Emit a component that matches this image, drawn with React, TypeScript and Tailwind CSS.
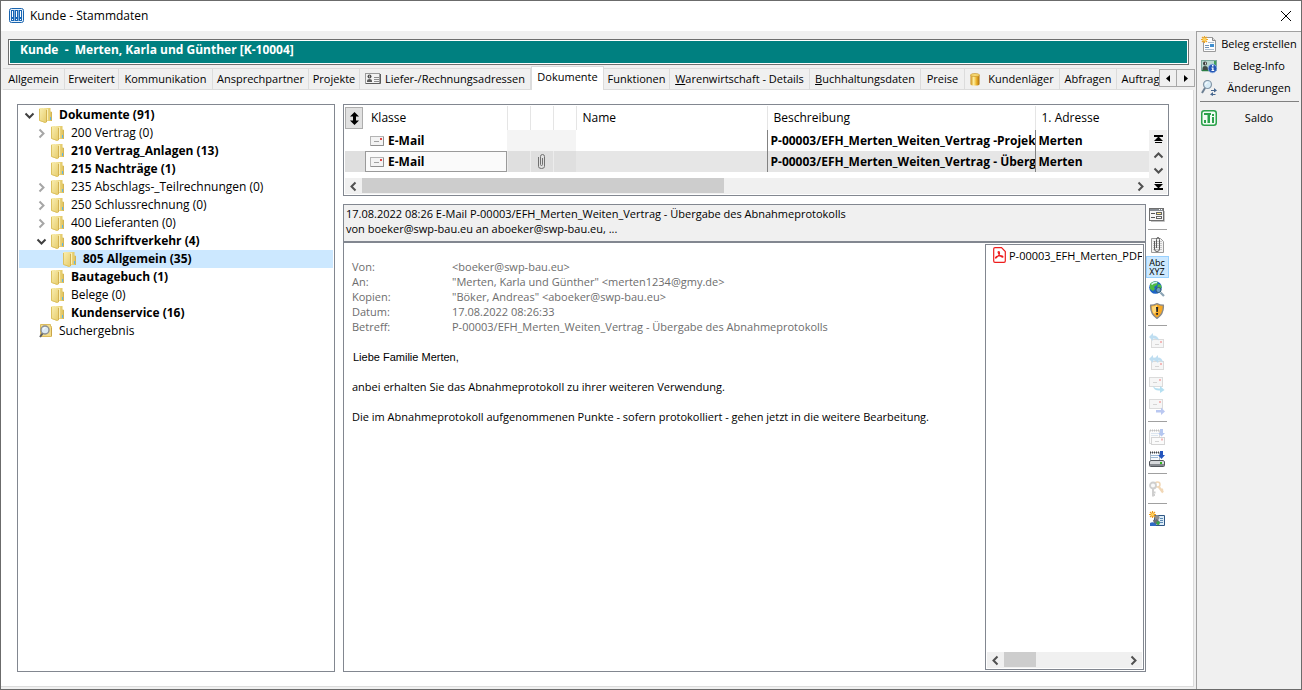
import type { ReactNode } from "react"
import clsx from "clsx"

/* ---------- small glyphs ---------- */

type Direction = "left" | "right" | "up" | "down"

const chevronPaths: Record<Direction, string> = {
  left: "M7.5 1.5 3.5 5.5l4 4",
  right: "M3.5 1.5l4 4-4 4",
  up: "M1.5 7.5l4-4 4 4",
  down: "M1.5 3.5l4 4 4-4",
}

function Chevron({ dir, color = "#505050" }: { dir: Direction; color?: string }) {
  return (
    <svg width="11" height="11" viewBox="0 0 11 11" fill="none" stroke={color} strokeWidth="2">
      <path d={chevronPaths[dir]} />
    </svg>
  )
}

function JumpGlyph({ flip }: { flip?: boolean }) {
  return (
    <svg width="9" height="9" viewBox="0 0 9 9" className={clsx(flip && "rotate-180")}>
      <path d="M0 0h9v2H0zM4 2h1l4 4H0zM1 7h7v1H1z" fill="#000" />
    </svg>
  )
}

function Icon16({ children, faded }: { children: ReactNode; faded?: boolean }) {
  return (
    <svg width="16" height="16" viewBox="0 0 16 16" className={clsx("shrink-0", faded && "opacity-35")}>
      {children}
    </svg>
  )
}

/* ---------- icons ---------- */

function AppIcon() {
  return (
    <svg width="16" height="16" viewBox="0 0 16 16">
      <rect x="0.5" y="0.5" width="14" height="14" rx="2" fill="#e8f2fb" stroke="#1a64ae" />
      <path d="M2 2h3.500v11H2zM6 2h3.500v11H6zM10 2h3v11h-3z" fill="#1766b5" />
      <path d="M3 3h1v6H3zM7 3h1v6H7zM11 3h1v6h-1zM3 11h1v1H3zM7 11h1v1H7zM11 11h1v1h-1z" fill="#fff" />
    </svg>
  )
}

function FolderIcon() {
  return (
    <svg width="14" height="16" viewBox="0 0 14 16" className="shrink-0">
      <defs>
        <linearGradient id="folderFront" x1="0" x2="1" y1="0" y2="1">
          <stop offset="0" stopColor="#faf0b4" />
          <stop offset="1" stopColor="#e6cb69" />
        </linearGradient>
        <linearGradient id="folderBack" x1="0" x2="1" y1="0" y2="0">
          <stop offset="0" stopColor="#f6e9a6" />
          <stop offset="1" stopColor="#dfc25a" />
        </linearGradient>
      </defs>
      <path d="M5 1h6.500v3.500h1V14H5z" fill="url(#folderBack)" />
      <path d="M0 1.500 1 1h3l3.500 1.500V15.500L6 16 0 13.500z" fill="url(#folderFront)" />
      <path d="M.500 2v11.500l6 2" fill="none" stroke="#dcc160" />
      <path d="M7 3h1v12H7z" fill="#d3b252" />
      <path d="M8 2h1v11H8z" fill="#faf0b8" />
      <path d="M12 5h1v9h-1z" fill="#d2b455" />
      <path d="M11 10h1v3h-1z" fill="#5fb7e8" />
    </svg>
  )
}

function SearchFolderIcon() {
  return (
    <svg width="14" height="16" viewBox="0 0 14 16" className="shrink-0">
      <path d="M1.500 1.500h10v2h1v10h-11z" fill="#f3dc8a" stroke="#dcbc5e" />
      <path d="M12 5h1v8h-1z" fill="#c9a54a" />
      <circle cx="6" cy="7" r="4" fill="#dceaf4" stroke="#8b8f94" strokeWidth="1.4" />
      <path d="M4.500 6.500A2 2 0 0 1 6.500 4.500" stroke="#fff" fill="none" />
      <path d="M3.500 10.500 1 14" stroke="#5b5f66" strokeWidth="2" />
    </svg>
  )
}

function CardIcon() {
  return (
    <Icon16>
      <rect x="0.5" y="2.5" width="14" height="10" fill="#f3f3f3" stroke="#9a9a9a" />
      <path d="M1 12.5h14.5V3" stroke="#5d5d5d" fill="none" />
      <circle cx="4.5" cy="5.5" r="2" fill="#4d4d4d" />
      <path d="M2 11V9.5Q2 8 4.500 8T7 9.500V11z" fill="#5b5b5b" />
      <path d="M4 4.500h1v2H4z" fill="#bbb" />
      <path d="M9 6.500h5M9 8.500h5M9 10.500h5" stroke="#8c8c8c" />
    </Icon16>
  )
}

function BarrelIcon() {
  return (
    <svg width="10" height="13" viewBox="0 0 10 13" className="mr-1 shrink-0">
      <defs>
        <linearGradient id="barrel" x1="0" x2="1" y1="0" y2="0">
          <stop offset="0" stopColor="#c98a14" />
          <stop offset="0.35" stopColor="#fff0a0" />
          <stop offset="0.65" stopColor="#eeb52c" />
          <stop offset="1" stopColor="#a96d0c" />
        </linearGradient>
      </defs>
      <path d="M0.500 2v9q0 1.500 4.500 1.500T9.500 11V2z" fill="url(#barrel)" />
      <ellipse cx="5" cy="2" rx="4.500" ry="1.500" fill="#f6d973" stroke="#c28a1e" strokeWidth="0.6" />
    </svg>
  )
}

function MailIcon() {
  return (
    <svg width="14" height="10" viewBox="0 0 14 10" className="shrink-0">
      <rect x="0.5" y="0.5" width="13" height="9" fill="#f3f3f3" stroke="#b4b4b4" />
      <path d="M1 9.500h12.500V1" stroke="#8f8f8f" fill="none" />
      <rect x="10" y="2" width="2" height="2" fill="#e04848" />
      <path d="M4 5.500h5" stroke="#a0a0a0" />
    </svg>
  )
}

function PaperclipIcon() {
  return (
    <svg width="9" height="17" viewBox="0 0 9 17" fill="none" stroke="#707070" strokeWidth="1">
      <path d="M1.500 4v9.500q0 2 3 2t3-2V3.500q0-2-2-2t-2 2V11.500q0 1 1 1t1-1V5" />
    </svg>
  )
}

function PdfIcon() {
  return (
    <svg width="13" height="16" viewBox="0 0 13 16" fill="none" stroke="#ee1c1c" className="shrink-0">
      <path d="M2 .7h6.500L12.300 4.500V14q0 1.300-1.300 1.300H2Q.7 15.300.7 14V2Q.7.700 2 .7z" fill="#fff" strokeWidth="1.2" />
      <path d="M6 4.500c1 1.500.5 4-3 6.500-1 .5-.5-1.500 2-2s5-.3 5 .8-3-.3-4.200-2.800S5 4.500 6 4.500z" strokeWidth="1.1" />
    </svg>
  )
}

function NewDocIcon() {
  return (
    <Icon16>
      <path d="M2.500 1.500h9l3 3v11h-12z" fill="#fdfdfd" stroke="#9a9a9a" />
      <path d="M11.500 1.500v3h3" fill="#ddd" stroke="#8a8a8a" />
      <path d="M7 6.500h6M4 13.500h9" stroke="#a9bccf" />
      <path d="M4 9.500h4M4 11.500h4" stroke="#6f93b8" />
      <path d="M9 8h4v3H9z" fill="#3f8fd0" />
      <path d="M3.500 0v7M0 3.500h7M1 1l5 5M6 1 1 6" stroke="#f0a420" strokeWidth="1.200" />
      <circle cx="3.500" cy="3.500" r="1.700" fill="#ffd45c" />
    </Icon16>
  )
}

function InfoCardIcon() {
  return (
    <Icon16>
      <rect x="0.500" y="2.500" width="15" height="10" fill="#b9d8d0" stroke="#7aa59b" />
      <path d="M1 12.500h9" stroke="#2b7d42" strokeWidth="1.500" />
      <circle cx="4" cy="5.500" r="2" fill="#3d3d3d" />
      <path d="M1.500 12V10Q1.500 8 4 8T7 10v2z" fill="#404a44" />
      <path d="M4 4.500h1v2H4z" fill="#ddd" />
      <path d="M13 3h2v4h-2z" fill="#3fa05a" />
      <circle cx="11.500" cy="10.500" r="4.300" fill="#2456b4" stroke="#8fb0e4" strokeWidth="0.800" />
      <path d="M11 7h1.500v1.500H11zM10.500 9.500h2V12h.7v1h-2.700v-1h.7v-1.500h-.7z" fill="#fff" />
    </Icon16>
  )
}

function ChangesIcon() {
  return (
    <Icon16>
      <circle cx="6.500" cy="4.500" r="4" fill="#d7ebf6" stroke="#8597a8" strokeWidth="1.200" />
      <path d="M4.500 4.500Q4.500 2.500 6.500 2.500" stroke="#fff" fill="none" />
      <path d="M4 8 1 13" stroke="#6c7f92" strokeWidth="2" />
      <path d="M10 10.500h4M10.500 14.500h4" stroke="#47678f" />
      <path d="M13 8l3 2.500-3 2zM12 12l-3 2.500 3 1.500z" fill="#47678f" />
    </Icon16>
  )
}

function SaldoIcon() {
  return (
    <Icon16>
      <rect x="0.750" y="0.750" width="14.500" height="14.500" rx="2.500" fill="#f2fbf4" stroke="#2ba24b" strokeWidth="1.500" />
      <path d="M3 10h2v3H3zM6.500 5h2.500v8H6.500zM11 7h2v6h-2z" fill="#2ba24b" />
      <path d="M3 3h7v2H3zM11 4h2v2h-2z" fill="#2ba24b" />
    </Icon16>
  )
}

function FormIcon() {
  return (
    <Icon16>
      <rect x="0.500" y="1.500" width="14" height="12" fill="#f6f6f6" stroke="#6f6f6f" />
      <path d="M1 2h13v2H1z" fill="#858b92" />
      <path d="M10 2.500h1M12 2.500h1" stroke="#fff" />
      <path d="M2 6.500h4M2 10.500h4" stroke="#555" />
      <rect x="7.500" y="5.500" width="5" height="2" fill="#ffe98a" stroke="#666" />
      <rect x="7.500" y="9.500" width="5" height="2" fill="#fff" stroke="#666" />
      <path d="M2 14.500h13.500V4" stroke="#c2c2c2" fill="none" />
    </Icon16>
  )
}

function ClipPageIcon() {
  return (
    <Icon16>
      <path d="M2.500 1.500h9l3 3v11h-12z" fill="#f3f3f3" stroke="#9a9a9a" />
      <path d="M4 4.500h9M4 6.500h9M4 8.500h9M4 10.500h9M4 12.500h9" stroke="#c6c6c6" />
      <path d="M5.500 4v8q0 2.500 2.500 2.500t2.500-2.500V2.500Q10.500.500 9 .500T7.500 2.500V11" fill="none" stroke="#5d5d5d" />
    </Icon16>
  )
}

function GlobeIcon() {
  return (
    <Icon16>
      <circle cx="6.500" cy="6.500" r="6.300" fill="#1d63c4" />
      <path d="M1 3Q4-.5 9 1L8 4 5 6 6 8 4 10 1 8zM9 3l3 1 .5 3L10 8 8 7z" fill="#4dbb43" />
      <path d="M2.500 3.500Q4.500 1 8 1.500" stroke="#d6f0ff" fill="none" strokeWidth="1.500" />
      <circle cx="9.500" cy="9" r="2.500" fill="#8fb6cc" fillOpacity="0.7" stroke="#2f5a74" />
      <path d="M11.500 11.500 15 15" stroke="#8ba3b4" strokeWidth="2.200" />
    </Icon16>
  )
}

function ShieldIcon() {
  return (
    <Icon16>
      <path d="M8 .700Q11 2.300 14.300 2.300 15 11 8 15.300 1 11 1.700 2.300 5 2.300 8 .700z" fill="#f7a823" stroke="#8a8a8a" strokeWidth="1.400" />
      <path d="M8 2Q5 3.500 3 3.500 3 9 5 11L8 8z" fill="#ffd777" />
      <path d="M7 4h2.200L8.800 9H7.400zM7.200 10h1.800v1.800H7.200z" fill="#222" />
    </Icon16>
  )
}

function ReplyIcon({ all }: { all?: boolean }) {
  return (
    <Icon16 faded>
      <rect x="2.500" y="6.500" width="12" height="8" fill="#e8e8e8" stroke="#999" />
      <path d="M6 11.500h4" stroke="#888" />
      <path d="M11 8h2v2h-2z" fill="#e03a3a" />
      <path d="M0 4l4-4v2.500q5 0 6 5Q8 5.500 4 5.500V8z" fill="#4aa3d8" />
      {all && <path d="M5 4l4-4v2.500q4 0 5 5Q12 5.500 9 5.500V8z" fill="#4aa3d8" />}
    </Icon16>
  )
}

function ForwardIcon({ straight }: { straight?: boolean }) {
  return (
    <Icon16 faded>
      <rect x="0.500" y="0.500" width="13" height="9" fill="#e8e8e8" stroke="#999" />
      <path d="M4 5.500h4" stroke="#888" />
      <path d="M10 2h2v2h-2z" fill="#e03a3a" />
      {straight ? (
        <path d="M7 11h5V8.500l4 4-4 3.500v-2.500H7z" fill="#3c64d8" />
      ) : (
        <path d="M4 9q2 3 7 2.500V9l4.500 4L11 16v-2.500Q5 14 4 9z" fill="#2fa5d8" />
      )}
    </Icon16>
  )
}

function NotepadMailIcon() {
  return (
    <Icon16 faded>
      <path d="M.5 1.500h10v13H.5z" fill="#f4f4f4" stroke="#999" />
      <path d="M1 1.500h9" stroke="#555" strokeDasharray="1 1" strokeWidth="2" />
      <path d="M2 4.500h7M2 6.500h7" stroke="#9db9d4" />
      <path d="M11 0h3v4h2l-3.500 3.500L9 4h2z" fill="#2f62d6" />
      <rect x="2.500" y="8.500" width="13" height="7" fill="#f4f4f4" stroke="#888" />
      <path d="M12 9.500h2v2h-2z" fill="#e03a3a" />
      <path d="M6 12.500h4" stroke="#888" />
    </Icon16>
  )
}

function NotepadDriveIcon() {
  return (
    <Icon16>
      <path d="M1.500 1.500h9v8h-9z" fill="#f8fbfe" stroke="#a9b6c2" />
      <path d="M1 1.500h9" stroke="#444" strokeDasharray="1 1" strokeWidth="2" />
      <path d="M2 4.500h7M2 6.500h7" stroke="#9dbbd6" />
      <path d="M11 0h3v4h2l-3.500 4L9 4h2z" fill="#2455bd" />
      <path d="M2 9.500h12l1.500 1v4q0 1-1 1h-13q-1 0-1-1v-4z" fill="#d6d8db" stroke="#54585e" />
      <path d="M1 13h14v2H1z" fill="#85898f" />
      <path d="M11 11h2v2h-2z" fill="#32b81e" />
    </Icon16>
  )
}

function KeysIcon() {
  return (
    <Icon16 faded>
      <circle cx="8.500" cy="3.500" r="2.500" fill="none" stroke="#d89030" strokeWidth="1.500" />
      <path d="M9.500 5.500l4.500 6M12 9.500l2-1.200" stroke="#d89030" strokeWidth="2.200" />
      <circle cx="4" cy="4.500" r="3" fill="#eee" stroke="#777" strokeWidth="1.800" />
      <path d="M4 7.500v8M4 11.500h2.500M4 14h2" stroke="#777" strokeWidth="2" />
    </Icon16>
  )
}

function NewTaskIcon() {
  return (
    <Icon16>
      <path d="M5.500 4.500h10v10h-10z" fill="#dcecf8" stroke="#2f5684" />
      <path d="M11 7.500h3M11 9.500h3M11 11.500h3" stroke="#5d8ab4" />
      <circle cx="8" cy="6.500" r="2.500" fill="#8d8f92" />
      <path d="M4 9l4-1 3 3-1 3-5-1z" fill="#6a6d72" />
      <circle cx="9" cy="12" r="1.700" fill="#35a845" />
      <path d="M1 12q3-2 6 1v2H1z" fill="#2e69c4" />
      <path d="M3.500 0v7M0 3.500h7M1 1l5 5M6 1 1 6" stroke="#ee9d1c" strokeWidth="1.200" />
      <circle cx="3.500" cy="3.500" r="1.500" fill="#ffd45c" />
    </Icon16>
  )
}

/* ---------- data ---------- */

const tabs: { label: string; width: string; icon?: ReactNode; accel?: boolean; active?: boolean }[] = [
  { label: "Allgemein", width: "w-[62px]" },
  { label: "Erweitert", width: "w-[54px]" },
  { label: "Kommunikation", width: "w-[94px]" },
  { label: "Ansprechpartner", width: "w-[96px]" },
  { label: "Projekte", width: "w-[51px]" },
  { label: "Liefer-/Rechnungsadressen", width: "w-[171px]", icon: <CardIcon /> },
  { label: "Dokumente", width: "w-[73px]", active: true },
  { label: "Funktionen", width: "w-[66px]" },
  { label: "Warenwirtschaft - Details", width: "w-[140px]", accel: true },
  { label: "Buchhaltungsdaten", width: "w-[111px]", accel: true },
  { label: "Preise", width: "w-[44px]" },
  { label: "Kundenläger", width: "w-[95px]", icon: <BarrelIcon /> },
  { label: "Abfragen", width: "w-[57px]" },
  { label: "Auftrag", width: "w-[48px]" },
]

const indents = ["pl-1", "pl-4", "pl-7"]

const tree: { label: string; level: number; bold?: boolean; state?: "open" | "closed"; selected?: boolean; search?: boolean }[] = [
  { label: "Dokumente (91)", level: 0, bold: true, state: "open" },
  { label: "200 Vertrag (0)", level: 1, state: "closed" },
  { label: "210 Vertrag_Anlagen (13)", level: 1, bold: true },
  { label: "215 Nachträge (1)", level: 1, bold: true },
  { label: "235 Abschlags-_Teilrechnungen (0)", level: 1, state: "closed" },
  { label: "250 Schlussrechnung (0)", level: 1, state: "closed" },
  { label: "400 Lieferanten (0)", level: 1, state: "closed" },
  { label: "800 Schriftverkehr (4)", level: 1, bold: true, state: "open" },
  { label: "805 Allgemein (35)", level: 2, bold: true, selected: true },
  { label: "Bautagebuch (1)", level: 1, bold: true },
  { label: "Belege (0)", level: 1 },
  { label: "Kundenservice (16)", level: 1, bold: true },
  { label: "Suchergebnis", level: 0, search: true },
]

const mails = [
  { klasse: "E-Mail", text: "P-00003/EFH_Merten_Weiten_Vertrag -Projekt", adresse: "Merten" },
  { klasse: "E-Mail", text: "P-00003/EFH_Merten_Weiten_Vertrag - Überg", adresse: "Merten", clip: true, selected: true },
]

const mailHeader = [
  ["Von:", "<boeker@swp-bau.eu>"],
  ["An:", "\"Merten, Karla und Günther\" <merten1234@gmy.de>"],
  ["Kopien:", "\"Böker, Andreas\" <aboeker@swp-bau.eu>"],
  ["Datum:", "17.08.2022 08:26:33"],
  ["Betreff:", "P-00003/EFH_Merten_Weiten_Vertrag - Übergabe des Abnahmeprotokolls"],
]

const toolGroups: { label: string; icon: ReactNode; disabled?: boolean; pressed?: boolean }[][] = [
  [{ label: "Maske", icon: <FormIcon /> }],
  [
    { label: "Anlagen", icon: <ClipPageIcon /> },
    { label: "Textansicht", icon: <span className="block text-[9px] leading-[9px]">Abc<br />XYZ</span>, pressed: true },
    { label: "Im Browser anzeigen", icon: <GlobeIcon /> },
    { label: "Sicherheit", icon: <ShieldIcon /> },
  ],
  [
    { label: "Antworten", icon: <ReplyIcon />, disabled: true },
    { label: "Allen antworten", icon: <ReplyIcon all />, disabled: true },
    { label: "Weiterleiten", icon: <ForwardIcon />, disabled: true },
    { label: "Senden", icon: <ForwardIcon straight />, disabled: true },
  ],
  [
    { label: "Als E-Mail ablegen", icon: <NotepadMailIcon />, disabled: true },
    { label: "Speichern", icon: <NotepadDriveIcon /> },
  ],
  [{ label: "Rechte", icon: <KeysIcon />, disabled: true }],
  [{ label: "Neue Aufgabe", icon: <NewTaskIcon /> }],
]

/* ---------- parts ---------- */

function TabStrip() {
  return (
    <div className="flex items-start text-[11px]">
      <div role="tablist" className="flex h-6 min-w-0 flex-1 items-end overflow-hidden pl-[2px]">
        {tabs.map((tab) => (
          <button
            key={tab.label}
            role="tab"
            aria-selected={!!tab.active}
            className={clsx(
              "flex shrink-0 items-center justify-center gap-1 whitespace-nowrap border-r border-t border-[#dcdcdc]",
              tab.width,
              tab.active ? "h-6 border-l bg-white pb-1" : "h-[22px] border-b",
            )}
          >
            {tab.icon}
            {tab.accel ? (
              <span>
                <u>{tab.label[0]}</u>
                {tab.label.slice(1)}
              </span>
            ) : (
              <span>{tab.label}</span>
            )}
          </button>
        ))}
      </div>
      <div className="mr-[1px] mt-[3px] flex h-[18px] shrink-0">
        <button aria-label="Tabs zurück" className="flex w-[18px] items-center justify-center border border-[#a8a8a8]">
          <svg width="4" height="7" viewBox="0 0 4 7"><path d="M4 0v7L0 3.500z" /></svg>
        </button>
        <button aria-label="Tabs vor" className="flex w-[18px] items-center justify-center border border-l-0 border-[#a8a8a8]">
          <svg width="4" height="7" viewBox="0 0 4 7"><path d="M0 0v7l4-3.500z" /></svg>
        </button>
      </div>
    </div>
  )
}

function DocumentTree() {
  return (
    <div role="tree" className="w-[318px] shrink-0 border border-[#828790] bg-white p-px">
      {tree.map((node) => (
        <div
          key={node.label}
          role="treeitem"
          aria-selected={!!node.selected}
          className={clsx("flex h-[18px] items-center", indents[node.level], node.bold && "font-bold", node.selected && "bg-[#cce8ff]")}
        >
          <span className="mr-[3px] flex w-[13px] shrink-0 justify-center">
            {node.state === "open" && <Chevron dir="down" color="#404040" />}
            {node.state === "closed" && <Chevron dir="right" color="#a6a6a6" />}
          </span>
          {node.search ? <SearchFolderIcon /> : <FolderIcon />}
          <span className="ml-[6px] whitespace-nowrap">{node.label}</span>
        </div>
      ))}
    </div>
  )
}

function HorizontalScroll({ thumb }: { thumb: string }) {
  return (
    <div className="flex h-4 items-center bg-[#f0f0f0]">
      <button aria-label="Nach links" className="flex w-[17px] shrink-0 justify-center">
        <Chevron dir="left" />
      </button>
      <div className="h-full min-w-0 flex-1">
        <div className={clsx("h-[15px] bg-[#cdcdcd]", thumb)} />
      </div>
      <button aria-label="Nach rechts" className="flex w-[17px] shrink-0 justify-center">
        <Chevron dir="right" />
      </button>
    </div>
  )
}

function MailTable() {
  return (
    <div className="flex h-[92px] shrink-0 border border-[#828790] bg-white p-px">
      <div className="flex min-w-0 flex-1 flex-col justify-between">
        <table className="w-full table-fixed border-collapse text-left">
          <colgroup>
            <col className="w-5" />
            <col className="w-[142px]" />
            <col className="w-[23px]" />
            <col className="w-[23px]" />
            <col className="w-[23px]" />
            <col className="w-[191px]" />
            <col />
            <col className="w-[114px]" />
          </colgroup>
          <thead>
            <tr className="h-6">
              <th className="p-0">
                <button aria-label="Sortierung" className="flex h-[22px] w-[18px] items-center justify-center border border-[#adadad] bg-[#e1e1e1]">
                  <svg width="9" height="13" viewBox="0 0 9 13"><path d="M4.500 0 9 4.500H6v4h3L4.500 13 0 8.500h3v-4H0z" /></svg>
                </button>
              </th>
              <th className="py-0 pl-[6px] font-normal">Klasse</th>
              <th className="border-l border-[#e5e5e5] p-0" />
              <th className="border-l border-[#e5e5e5] p-0" />
              <th className="border-l border-[#e5e5e5] p-0" />
              <th className="border-l border-[#e5e5e5] py-0 pl-[6px] font-normal">Name</th>
              <th className="border-l border-[#e5e5e5] py-0 pl-[6px] font-normal">Beschreibung</th>
              <th className="border-l border-[#e5e5e5] py-0 pl-[6px] font-normal">1. Adresse</th>
            </tr>
          </thead>
          <tbody>
            {mails.map((mail) => {
              const mid = clsx("p-0", mail.selected ? "border-l border-[#ececec] bg-[#dfdfdf]" : "bg-[#f4f4f4]")
              return (
                <tr key={mail.text} className={clsx("h-[21px] font-bold", mail.selected && "bg-[#e6e6e6]")}>
                  <td className={clsx("p-0", mail.selected && "bg-[#dfdfdf]")} />
                  <td className="p-0">
                    <div className={clsx("flex h-[21px] items-center gap-1 border pl-1", mail.selected ? "border-[#9a9a9a] bg-[#fafafa]" : "border-transparent")}>
                      <MailIcon />
                      {mail.klasse}
                    </div>
                  </td>
                  <td className={mid} />
                  <td className={mid}>
                    {mail.clip && <span className="flex justify-center"><PaperclipIcon /></span>}
                  </td>
                  <td className={mid} />
                  <td className="p-0" />
                  <td className="border-l border-[#828282] py-0 pl-[3px] pr-0">
                    <div className="overflow-hidden whitespace-nowrap">{mail.text}</div>
                  </td>
                  <td className="border-l border-[#828282] py-0 pl-[3px]">{mail.adresse}</td>
                </tr>
              )
            })}
          </tbody>
        </table>
        <HorizontalScroll thumb="w-[47%]" />
      </div>
      <div className="mt-6 flex w-[18px] shrink-0 flex-col items-center justify-between bg-[#f0f0f0] pb-1 pt-[5px]">
        <button aria-label="Zum Anfang" className="flex"><JumpGlyph /></button>
        <div className="flex flex-col gap-1">
          <button aria-label="Hoch" className="flex"><Chevron dir="up" /></button>
          <button aria-label="Runter" className="flex"><Chevron dir="down" /></button>
        </div>
        <button aria-label="Zum Ende" className="flex"><JumpGlyph flip /></button>
      </div>
    </div>
  )
}

function MailPreview() {
  return (
    <div className="flex min-h-0 min-w-0 flex-1 flex-col border border-[#828790] text-[11px] leading-[15px]">
      <div className="h-[38px] shrink-0 border-b-2 border-[#828790] bg-[#f0f0f0] px-[2px] pt-[1px]">
        <p>17.08.2022 08:26 E-Mail P-00003/EFH_Merten_Weiten_Vertrag - Übergabe des Abnahmeprotokolls</p>
        <p>von boeker@swp-bau.eu an aboeker@swp-bau.eu, ...</p>
      </div>
      <div className="flex min-h-0 flex-1">
        <div className="min-w-0 flex-1 px-2 pt-4">
          <dl className="grid grid-cols-[100px_1fr] text-[#6d6d6d]">
            {mailHeader.map(([label, value]) => (
              <div key={label} className="contents">
                <dt>{label}</dt>
                <dd>{value}</dd>
              </div>
            ))}
          </dl>
          <p className="mt-4 pl-px font-['Liberation_Sans',sans-serif]">Liebe Familie Merten,</p>
          <p className="mt-[14px]">anbei erhalten Sie das Abnahmeprotokoll zu ihrer weiteren Verwendung.</p>
          <p className="mt-[15px]">Die im Abnahmeprotokoll aufgenommenen Punkte - sofern protokolliert - gehen jetzt in die weitere Bearbeitung.</p>
        </div>
        <div className="my-px mr-px flex w-[159px] shrink-0 flex-col justify-between border border-[#828790] p-px">
          <a href="#anlage" className="flex h-[18px] items-center gap-[3px] overflow-hidden whitespace-nowrap pl-[6px]">
            <PdfIcon />
            P-00003_EFH_Merten_PDF
          </a>
          <HorizontalScroll thumb="w-8" />
        </div>
      </div>
    </div>
  )
}

function ToolColumn() {
  return (
    <div className="flex w-[23px] shrink-0 flex-col">
      {toolGroups.map((group, i) => (
        <div key={i}>
          {i > 0 && <div className="mx-[2px] mb-1 mt-[3px] border-t border-[#a0a0a0]" />}
          {group.map((tool) => (
            <button
              key={tool.label}
              aria-label={tool.label}
              disabled={tool.disabled}
              className={clsx(
                "flex h-[22px] w-full items-center justify-center border pr-px",
                tool.pressed ? "border-[#99d1ff] bg-[#cce8ff]" : "border-transparent",
              )}
            >
              {tool.icon}
            </button>
          ))}
        </div>
      ))}
    </div>
  )
}

function SideButton({ icon, label }: { icon: ReactNode; label: string }) {
  return (
    <button className="flex h-[22px] w-full items-center pl-1 text-[11px]">
      {icon}
      <span className="flex-1 whitespace-nowrap text-center">{label}</span>
    </button>
  )
}

export default function App() {
  return (
    <div className="flex h-screen flex-col overflow-hidden border border-[#6b6b6b] bg-[#f0f0f0] font-['Open_Sans','Noto_Sans',sans-serif] text-[12px] leading-4 text-black">
      <header className="flex h-[30px] shrink-0 items-center justify-between bg-white pl-2 pr-[9px]">
        <div className="flex items-center gap-[5px]">
          <AppIcon />
          <h1>Kunde - Stammdaten</h1>
        </div>
        <button aria-label="Schließen">
          <svg width="12" height="12" viewBox="0 0 12 12" fill="none" stroke="#000"><path d="M1 1l10 10M11 1 1 11" /></svg>
        </button>
      </header>

      <div className="flex min-h-0 flex-1">
        <main className="flex min-w-0 flex-1 flex-col pb-[2px] pt-2">
          <div className="mx-[7px] h-[26px] shrink-0 border border-[#6e6e6e] bg-white p-px">
            <h2 className="h-full whitespace-pre bg-[#008080] pl-[10px] pt-px font-bold text-white">Kunde  -  Merten, Karla und Günther [K-10004]</h2>
          </div>
          <div className="mt-px shrink-0">
            <TabStrip />
          </div>
          <div className="mr-[2px] flex min-h-0 flex-1 gap-2 border-b border-r border-[#dcdcdc] bg-white pb-[14px] pl-4 pr-6 pt-[14px]">
            <DocumentTree />
            <div className="flex min-w-0 flex-1 flex-col gap-2">
              <MailTable />
              <div className="flex min-h-0 flex-1">
                <MailPreview />
                <ToolColumn />
              </div>
            </div>
          </div>
        </main>

        <aside className="w-[105px] shrink-0 border-l border-t border-[#a0a0a0] pt-[1px]">
          <SideButton icon={<NewDocIcon />} label="Beleg erstellen" />
          <SideButton icon={<InfoCardIcon />} label="Beleg-Info" />
          <SideButton icon={<ChangesIcon />} label="Änderungen" />
          <div className="mb-[5px] ml-[3px] mr-[2px] mt-[2px] border-t border-[#808080]" />
          <SideButton icon={<SaldoIcon />} label="Saldo" />
        </aside>
      </div>
    </div>
  )
}
